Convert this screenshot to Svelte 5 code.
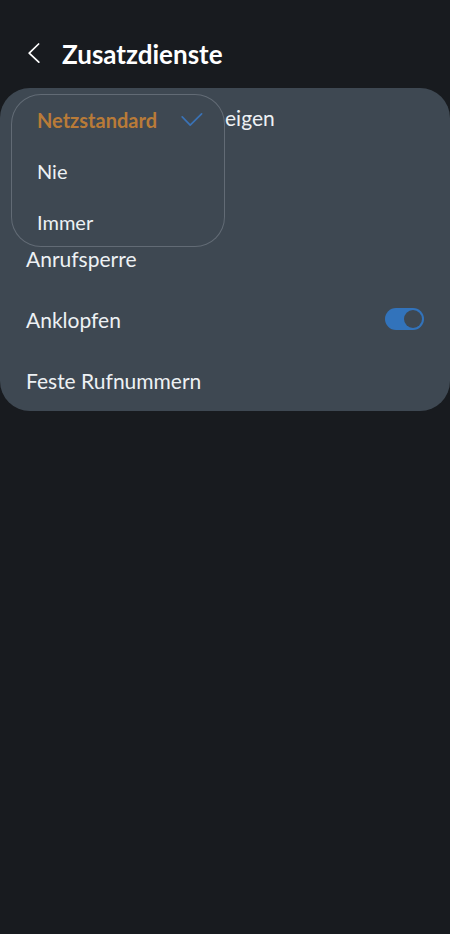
<script lang="ts">
	const options = ['Netzstandard', 'Nie', 'Immer'];

	let selected = $state('Netzstandard');
	let callWaiting = $state(true);
</script>

<main class="screen">
	<header class="bar">
		<button class="back" aria-label="Zurück">
			<svg width="12" height="20" viewBox="0 0 12 20" fill="none" stroke="currentColor" stroke-width="1.7" stroke-linecap="round" stroke-linejoin="round">
				<path d="M10.6 1 L1.2 10.2 L10.8 19.2" />
			</svg>
		</button>
		<h1>Zusatzdienste</h1>
	</header>

	<section class="card">
		<button class="row row-caller">eigen</button>
		<button class="row">Anrufsperre</button>
		<label class="row">
			Anklopfen
			<input class="switch" type="checkbox" role="switch" bind:checked={callWaiting} />
		</label>
		<button class="row">Feste Rufnummern</button>

		<!-- Auswahl liegt über der ersten Zeile -->
		<div class="menu" role="listbox" aria-label="Nummer anzeigen">
			{#each options as option}
				<button
					class="option"
					class:active={option === selected}
					role="option"
					aria-selected={option === selected}
					onclick={() => (selected = option)}
				>
					{option}
					{#if option === selected}
						<svg width="22" height="15" viewBox="0 0 22 15" fill="none" stroke="#3a72b5" stroke-width="1.7" stroke-linecap="round" stroke-linejoin="round">
							<path d="M1.2 4.8 L9.2 13.2 L20.6 1.8" />
						</svg>
					{/if}
				</button>
			{/each}
		</div>
	</section>
</main>

<style>
	:global(body) {
		background: #181b1f;
	}

	.screen {
		min-height: 100vh;
		box-sizing: border-box;
		font-family: Lato, 'Open Sans', sans-serif;
		color: #edf1f4;
	}

	button {
		border: 0;
		margin: 0;
		background: none;
		color: inherit;
		font: inherit;
		text-align: left;
		cursor: pointer;
	}

	.bar {
		display: flex;
		align-items: center;
		gap: 22px;
		height: 88px;
		box-sizing: border-box;
		padding: 20px 28px 0;
	}

	.back {
		display: flex;
		padding: 0 0 2px;
		color: #fff;
	}

	h1 {
		margin: 0;
		font-size: 26px;
		line-height: 32px;
		font-weight: 700;
		color: #fff;
	}

	.card {
		position: relative;
		display: flex;
		flex-direction: column;
		border-radius: 30px;
		background: #3e4852;
	}

	.row {
		display: flex;
		align-items: center;
		justify-content: space-between;
		min-height: 61px;
		padding: 0 26px;
		font-size: 21px;
		line-height: 28px;
	}

	.row-caller {
		align-items: flex-start;
		min-height: 140px;
		padding-top: 16px;
		padding-left: 225px;
	}

	.switch {
		appearance: none;
		display: flex;
		align-items: center;
		width: 39px;
		height: 22px;
		margin: 0 0 2px;
		padding: 0 2px;
		border-radius: 11px;
		background: #6d7681;
		cursor: pointer;
	}

	.switch::before {
		content: '';
		width: 18px;
		height: 18px;
		border-radius: 50%;
		background: #3e4852;
	}

	.switch:checked {
		justify-content: flex-end;
		background: #3273bb;
	}

	.menu {
		position: absolute;
		top: 6px;
		left: 11px;
		width: 214px;
		border-radius: 30px;
		background: #3e4852;
		box-shadow: inset 0 0 0 1px #626b75;
	}

	.option {
		display: flex;
		align-items: center;
		justify-content: space-between;
		width: 100%;
		height: 51px;
		padding: 0 22px 0 26px;
		font-size: 20px;
		line-height: 26px;
	}

	.active {
		font-weight: 700;
		color: #b97b38;
	}
</style>
